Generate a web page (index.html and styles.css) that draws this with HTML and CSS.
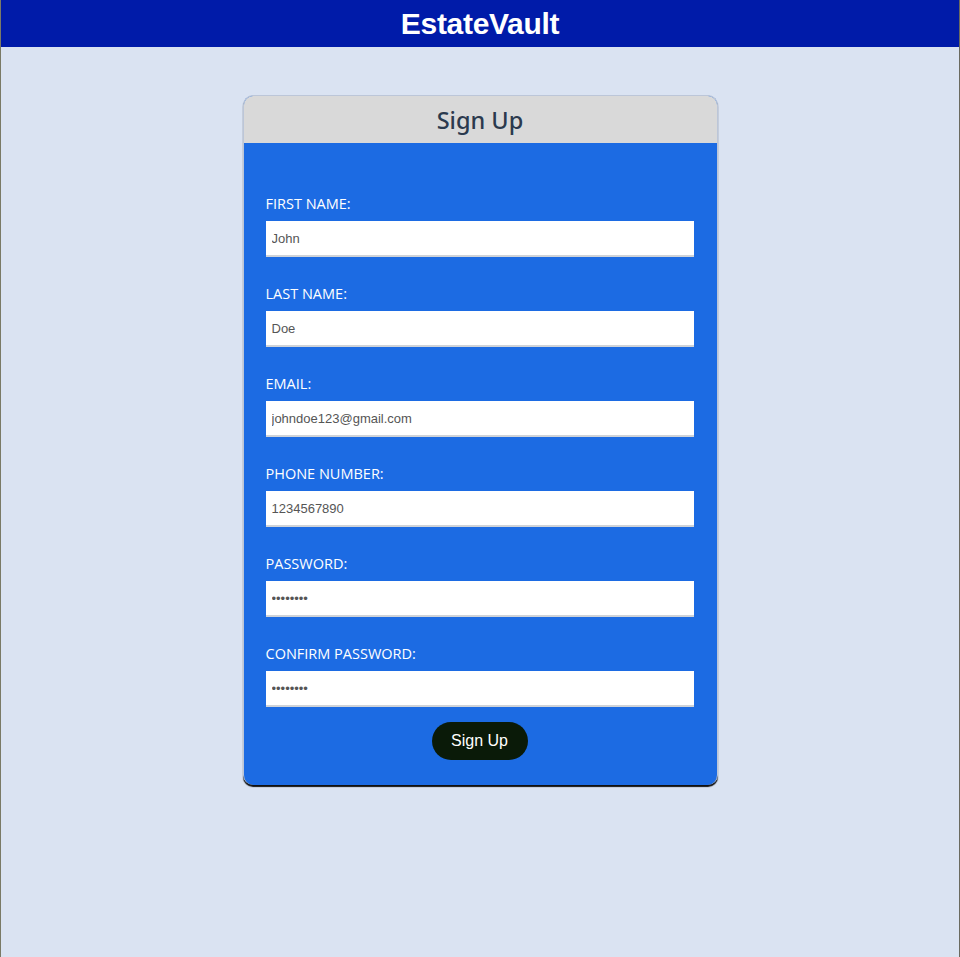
FILE: index.html
```html
<!DOCTYPE html>
<html lang="en">
<head>
<meta charset="utf-8">
<title>EstateVault - Sign Up</title>
<link rel="stylesheet" href="styles.css">
</head>
<body>
<header class="topbar"><h1 class="brand">EstateVault</h1></header>
<main class="page">
  <section class="card">
    <div class="card-head"><h2 class="card-title">Sign Up</h2></div>
    <form class="card-body">
      <div class="field">
        <label class="label" for="fn">FIRST NAME:</label>
        <input class="input" id="fn" type="text" value="John">
      </div>
      <div class="field">
        <label class="label" for="ln">LAST NAME:</label>
        <input class="input" id="ln" type="text" value="Doe">
      </div>
      <div class="field">
        <label class="label" for="em">EMAIL:</label>
        <input class="input" id="em" type="text" value="johndoe123@gmail.com">
      </div>
      <div class="field">
        <label class="label" for="ph">PHONE NUMBER:</label>
        <input class="input" id="ph" type="text" value="1234567890">
      </div>
      <div class="field">
        <label class="label" for="pw">PASSWORD:</label>
        <input class="input" id="pw" type="password" value="password">
      </div>
      <div class="field">
        <label class="label" for="cpw">CONFIRM PASSWORD:</label>
        <input class="input" id="cpw" type="password" value="password">
      </div>
      <div class="actions"><button class="btn" type="button">Sign Up</button></div>
    </form>
  </section>
</main>
</body>
</html>
```
FILE: styles.css
```css
* { box-sizing: border-box; }
html, body { margin: 0; padding: 0; }
body {
  min-height: 957px;
  background: #dae3f2;
  border-left: 1px solid #7a7a66;
  border-right: 1px solid #6a6a60;
  font-family: "Open Sans", "Noto Sans", sans-serif;
}
.topbar {
  height: 47px;
  background: #001ba9;
  display: flex;
  align-items: center;
  justify-content: center;
}
.brand {
  margin: 0;
  color: #fff;
  font-family: "Liberation Sans", Arial, sans-serif;
  font-weight: bold;
  font-size: 30px;
  line-height: 1;
  letter-spacing: -0.3px;
}
.page {
  display: flex;
  justify-content: center;
  padding-top: 48px;
}
.card {
  width: 475px;
  margin-left: 0;
  border: 1px solid #bcc6d8;
  border-bottom: none;
  border-radius: 10px;
  overflow: hidden;
  background: #1c6be3;
  box-shadow: 0 2px 1px #111;
}
.card-head {
  height: 47px;
  background: #d9d9d9;
  display: flex;
  align-items: center;
  justify-content: center;
}
.card-title {
  margin: 0;
  font-family: "Noto Sans", "Open Sans", sans-serif;
  font-weight: 500;
  font-size: 23.5px;
  color: #2b3a4e;
}
.card-body {
  padding: 51px 23px 25px 22px;
  display: flex;
  flex-direction: column;
  gap: 27px;
}
.field {
  display: flex;
  flex-direction: column;
  gap: 7px;
}
.label {
  color: #fff;
  font-size: 14.5px;
  line-height: 20px;
}
.input {
  width: 428px;
  height: 36px;
  border: none;
  border-bottom: 2px solid #cfd3d8;
  background: #fff;
  padding: 0 6px;
  font-family: "Liberation Sans", Arial, sans-serif;
  font-size: 13px;
  color: #555;
  outline: none;
}
.actions {
  display: flex;
  justify-content: center;
  margin-top: -12px;
}
.btn {
  width: 96px;
  height: 38px;
  border: none;
  border-radius: 19px;
  background: #0a1a08;
  color: #fff;
  font-family: "Liberation Sans", Arial, sans-serif;
  font-size: 16px;
  cursor: pointer;
}
```
